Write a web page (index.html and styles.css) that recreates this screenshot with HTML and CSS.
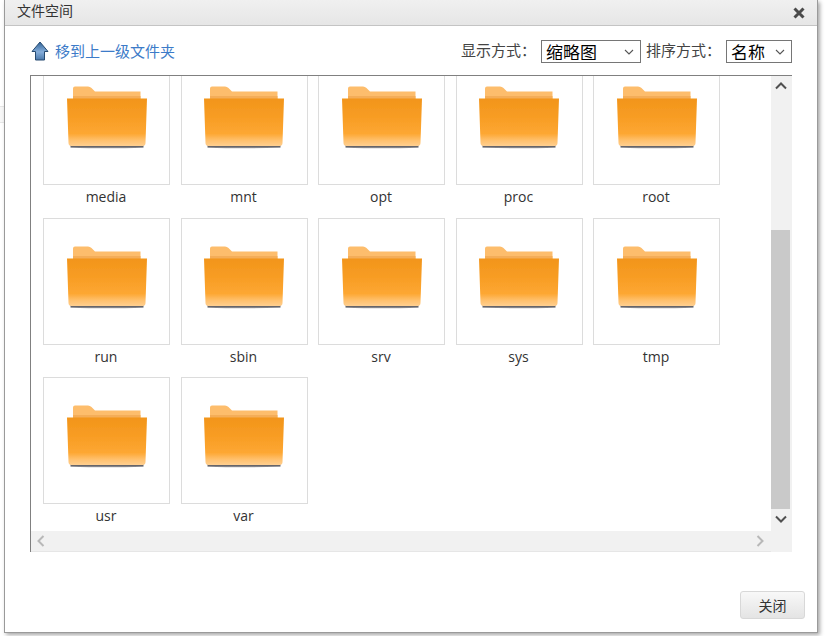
FILE: index.html
```html
<!DOCTYPE html>
<html lang="zh-CN">
<head>
<meta charset="utf-8">
<title>文件空间</title>
<link rel="stylesheet" href="styles.css">
</head>
<body>
<svg class="defs" width="0" height="0" aria-hidden="true">
  <defs>
    <linearGradient id="front" x1="0" y1="0" x2="0" y2="1">
      <stop offset="0" stop-color="#f2951a"/>
      <stop offset="0.4" stop-color="#f89d24"/>
      <stop offset="0.74" stop-color="#fda733"/>
      <stop offset="0.88" stop-color="#ffc06c"/>
      <stop offset="1" stop-color="#ffcf90"/>
    </linearGradient>
    <linearGradient id="shade" x1="0" y1="0" x2="0" y2="1">
      <stop offset="0" stop-color="#7a6a58"/>
      <stop offset="0.6" stop-color="#63646c"/>
      <stop offset="1" stop-color="#a8a8ac"/>
    </linearGradient>
    <filter id="soft" x="-5%" y="-50%" width="110%" height="200%">
      <feGaussianBlur stdDeviation="0.6"/>
    </filter>
    <filter id="softer" x="-2%" y="-2%" width="104%" height="104%">
      <feGaussianBlur stdDeviation="0.35"/>
    </filter>
    <symbol id="folder" viewBox="0 0 80 63">
      <path d="M6 12V2.500Q6 0.500 8 0.500H21Q23 0.500 24.500 2L28 5.500H73.500V14H6Z" fill="#fdbd6c"/>
      <rect x="6" y="10" width="67.500" height="3" fill="#f4ad58"/>
      <path d="M3.500 58.500H76.500V61.800Q40 62.800 3.500 61.800Z" fill="url(#shade)" filter="url(#soft)"/>
      <path d="M0 12.500H80L78.500 57Q78.500 60 75.500 60H4.500Q1.500 60 1.500 57Z" fill="url(#front)" filter="url(#softer)"/>
    </symbol>
  </defs>
</svg>
<div class="backdrop"></div>
<div class="dialog">
  <header class="titlebar">
    <span class="title">文件空间</span>
    <svg class="close" viewBox="0 0 12 12" width="12" height="12" aria-label="关闭"><path d="M1.500 1.500L10.500 10.500M10.500 1.500L1.500 10.500" stroke="#4a4a4a" stroke-width="3"/></svg>
  </header>
  <div class="toolbar">
    <a class="uplink" href="#">
      <svg class="upicon" viewBox="0 0 18 20" width="18" height="20" aria-hidden="true">
        <defs><linearGradient id="up" x1="0" y1="0" x2="0" y2="1"><stop offset="0" stop-color="#2f6296"/><stop offset="0.55" stop-color="#86aedb"/><stop offset="1" stop-color="#4a78aa"/></linearGradient></defs>
        <path d="M9 1L17 10.500L13.500 10.500V19H4.500V10.500L1 10.500Z" fill="url(#up)" stroke="#264a70" stroke-width="1"/>
      </svg>
      <span>移到上一级文件夹</span>
    </a>
    <div class="options">
      <label class="optlabel" for="view">显示方式：</label>
      <select id="view" class="sel sel-view"><option>缩略图</option></select>
      <label class="optlabel" for="sort">排序方式：</label>
      <select id="sort" class="sel sel-sort"><option>名称</option></select>
    </div>
  </div>
  <div class="frame">
    <div class="viewport">
      <ul class="grid">
        <li class="item"><div class="thumb"><svg class="folder"><use href="#folder"/></svg></div><span class="name">media</span></li>
        <li class="item"><div class="thumb"><svg class="folder"><use href="#folder"/></svg></div><span class="name">mnt</span></li>
        <li class="item"><div class="thumb"><svg class="folder"><use href="#folder"/></svg></div><span class="name">opt</span></li>
        <li class="item"><div class="thumb"><svg class="folder"><use href="#folder"/></svg></div><span class="name">proc</span></li>
        <li class="item"><div class="thumb"><svg class="folder"><use href="#folder"/></svg></div><span class="name">root</span></li>
        <li class="item"><div class="thumb"><svg class="folder"><use href="#folder"/></svg></div><span class="name">run</span></li>
        <li class="item"><div class="thumb"><svg class="folder"><use href="#folder"/></svg></div><span class="name">sbin</span></li>
        <li class="item"><div class="thumb"><svg class="folder"><use href="#folder"/></svg></div><span class="name">srv</span></li>
        <li class="item"><div class="thumb"><svg class="folder"><use href="#folder"/></svg></div><span class="name">sys</span></li>
        <li class="item"><div class="thumb"><svg class="folder"><use href="#folder"/></svg></div><span class="name">tmp</span></li>
        <li class="item"><div class="thumb"><svg class="folder"><use href="#folder"/></svg></div><span class="name">usr</span></li>
        <li class="item"><div class="thumb"><svg class="folder"><use href="#folder"/></svg></div><span class="name">var</span></li>
      </ul>
    </div>
    <div class="vbar">
      <svg class="arrow" viewBox="0 0 20 20" width="20" height="20"><path d="M5 12.500L10 7.500L15 12.500" fill="none" stroke="#505050" stroke-width="2"/></svg>
      <div class="vtrack"><div class="vthumb"></div></div>
      <svg class="arrow" viewBox="0 0 20 20" width="20" height="20"><path d="M5 7.500L10 12.500L15 7.500" fill="none" stroke="#505050" stroke-width="2"/></svg>
      <div class="vend"></div>
    </div>
    <div class="hbar">
      <svg class="arrow" viewBox="0 0 20 20" width="20" height="20"><path d="M12.500 5L7.500 10L12.500 15" fill="none" stroke="#b8b8b8" stroke-width="2"/></svg>
      <svg class="arrow" viewBox="0 0 20 20" width="20" height="20"><path d="M7.500 5L12.500 10L7.500 15" fill="none" stroke="#b8b8b8" stroke-width="2"/></svg>
    </div>
  </div>
  <footer class="footer">
    <button class="btn" type="button">关闭</button>
  </footer>
</div>
</body>
</html>
```
FILE: styles.css
```css
* { box-sizing: border-box; }
html, body { margin: 0; height: 100%; overflow: hidden; }
body {
  background: #fff;
  font-family: "Open Sans", "Noto Sans CJK SC", sans-serif;
  font-size: 14px;
  color: #333;
}
.defs { display: block; height: 0; }
.backdrop {
  position: absolute;
  left: 0;
  top: 106px;
  width: 4px;
  height: 17px;
  background: #f7f7f7;
  border-top: 1px solid #e6e6e6;
  border-bottom: 1px solid #e6e6e6;
}
.dialog {
  position: relative;
  width: 814px;
  height: 633px;
  margin-left: 4px;
  background: #fff;
  border: 1px solid #9a9a9a;
  border-top: 0;
  box-shadow: 2px 2px 4px rgba(0, 0, 0, 0.35);
  display: flex;
  flex-direction: column;
}
.titlebar {
  height: 26px;
  flex: none;
  display: flex;
  align-items: center;
  justify-content: space-between;
  padding: 0 12px;
  background: linear-gradient(#f0f0f0, #e6e6e6);
  border-bottom: 1px solid #c4c4c4;
}
.title { font-size: 14px; color: #333; line-height: 20px; margin-bottom: 4px; }
.toolbar {
  height: 49px;
  flex: none;
  display: flex;
  justify-content: space-between;
  align-items: flex-start;
  padding: 13px 25px 0 26px;
}
.uplink {
  display: flex;
  align-items: center;
  gap: 6px;
  color: #3c7bc8;
  text-decoration: none;
  font-size: 15px;
  line-height: 24px;
}
.options { display: flex; align-items: flex-start; gap: 5px; }
.optlabel { font-size: 15px; line-height: 24px; color: #444; margin-top: -1px; }
.sel {
  appearance: none;
  -webkit-appearance: none;
  height: 23px;
  padding: 0 0 2px 4px;
  margin: 1px 0 0;
  background: #fff url("data:image/svg+xml,%3Csvg xmlns='http://www.w3.org/2000/svg' width='10' height='6'%3E%3Cpath d='M1 1L5 5L9 1' fill='none' stroke='%23555' stroke-width='1.100'/%3E%3C/svg%3E") no-repeat right 6px center;
  border: 1px solid #767676;
  border-radius: 0;
  font-family: "Noto Sans CJK SC", sans-serif;
  font-size: 17px;
  line-height: 21px;
  color: #000;
}
.sel-view { width: 100px; }
.sel-sort { width: 66px; }
.frame {
  width: 762px;
  height: 477px;
  flex: none;
  margin-left: 25px;
  border-top: 1px solid #808080;
  border-left: 1px solid #808080;
  display: grid;
  grid-template-columns: 740px 21px;
  grid-template-rows: 455px 21px;
}
.viewport { overflow: hidden; grid-column: 1; grid-row: 1; }
.grid {
  list-style: none;
  margin: -18px 0 0;
  padding: 0 0 0 12px;
  display: grid;
  grid-template-columns: repeat(5, 127px);
  column-gap: 10.500px;
  grid-auto-rows: 159.500px;
}
.item { display: flex; flex-direction: column; align-items: center; }
.thumb {
  width: 127px;
  height: 127px;
  flex: none;
  border: 1px solid #dcdcdc;
  display: flex;
  justify-content: center;
  padding-top: 27px;
}
.folder { width: 80px; height: 63px; display: block; }
.name { font-size: 14px; line-height: 24px; color: #333; padding-right: 1px; }
.vbar {
  grid-column: 2;
  grid-row: 1 / span 2;
  background: #f1f1f1;
  display: flex;
  flex-direction: column;
}
.arrow { display: block; flex: none; }
.vtrack { flex: 1; display: flex; flex-direction: column; justify-content: flex-end; }
.vthumb { height: 279px; width: 19px; background: #c9c9c9; }
.vend { height: 23px; flex: none; }
.hbar {
  grid-column: 1;
  grid-row: 2;
  background: #f1f1f1;
  display: flex;
  justify-content: space-between;
  padding-right: 1px;
  border-bottom: 1px solid #e6e6e6;
}
.footer {
  flex: 1;
  display: flex;
  justify-content: flex-end;
  align-items: flex-start;
  padding: 39px 12px 0 0;
}
.btn {
  width: 65px;
  height: 28px;
  border: 1px solid #d8d8d8;
  border-radius: 3px;
  background: linear-gradient(#f8f8f8, #e4e4e4);
  font-family: "Noto Sans CJK SC", sans-serif;
  font-size: 14px;
  color: #333;
  padding: 0;
}
```
